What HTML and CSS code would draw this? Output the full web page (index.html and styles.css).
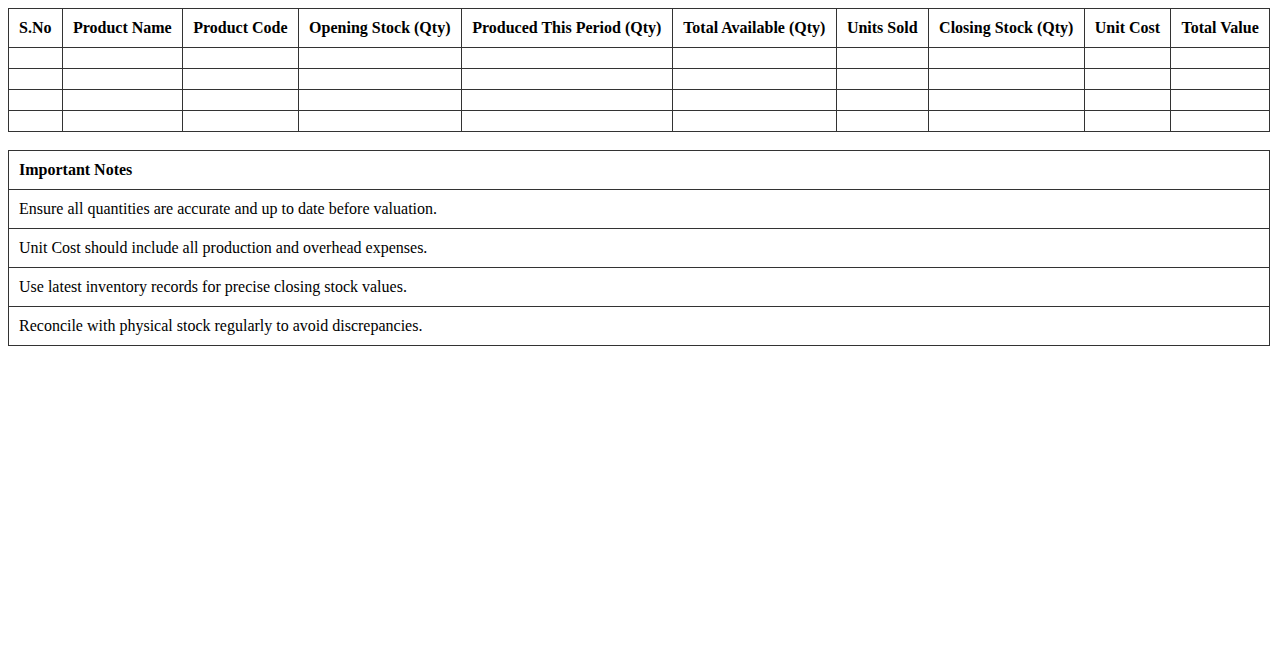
FILE: index.html
```html
<!DOCTYPE html>
<html>
<head>
<meta charset="utf-8">
<title>Stock Valuation</title>
<link rel="stylesheet" href="styles.css">
</head>
<body>
<table class="grid">
  <thead>
    <tr>
      <th>S.No</th>
      <th>Product Name</th>
      <th>Product Code</th>
      <th>Opening Stock (Qty)</th>
      <th>Produced This Period (Qty)</th>
      <th>Total Available (Qty)</th>
      <th>Units Sold</th>
      <th>Closing Stock (Qty)</th>
      <th>Unit Cost</th>
      <th>Total Value</th>
    </tr>
  </thead>
  <tbody>
    <tr><td></td><td></td><td></td><td></td><td></td><td></td><td></td><td></td><td></td><td></td></tr>
    <tr><td></td><td></td><td></td><td></td><td></td><td></td><td></td><td></td><td></td><td></td></tr>
    <tr><td></td><td></td><td></td><td></td><td></td><td></td><td></td><td></td><td></td><td></td></tr>
    <tr><td></td><td></td><td></td><td></td><td></td><td></td><td></td><td></td><td></td><td></td></tr>
  </tbody>
</table>

<table class="grid notes">
  <thead>
    <tr><th>Important Notes</th></tr>
  </thead>
  <tbody>
    <tr><td>Ensure all quantities are accurate and up to date before valuation.</td></tr>
    <tr><td>Unit Cost should include all production and overhead expenses.</td></tr>
    <tr><td>Use latest inventory records for precise closing stock values.</td></tr>
    <tr><td>Reconcile with physical stock regularly to avoid discrepancies.</td></tr>
  </tbody>
</table>
</body>
</html>
```

FILE: styles.css
```css
body {
  margin: 8px;
  font-family: "Liberation Serif", "Times New Roman", serif;
  font-size: 16px;
  color: #000;
  background: #fff;
}

.grid {
  width: 100%;
  border-collapse: collapse;
}

.grid th,
.grid td {
  border: 1px solid #333;
  padding: 10px;
  line-height: 18px;
}

.grid th {
  font-weight: bold;
}

.notes {
  margin-top: 18px;
}

.notes th {
  text-align: left;
}

.notes td {
  text-align: left;
}
```
